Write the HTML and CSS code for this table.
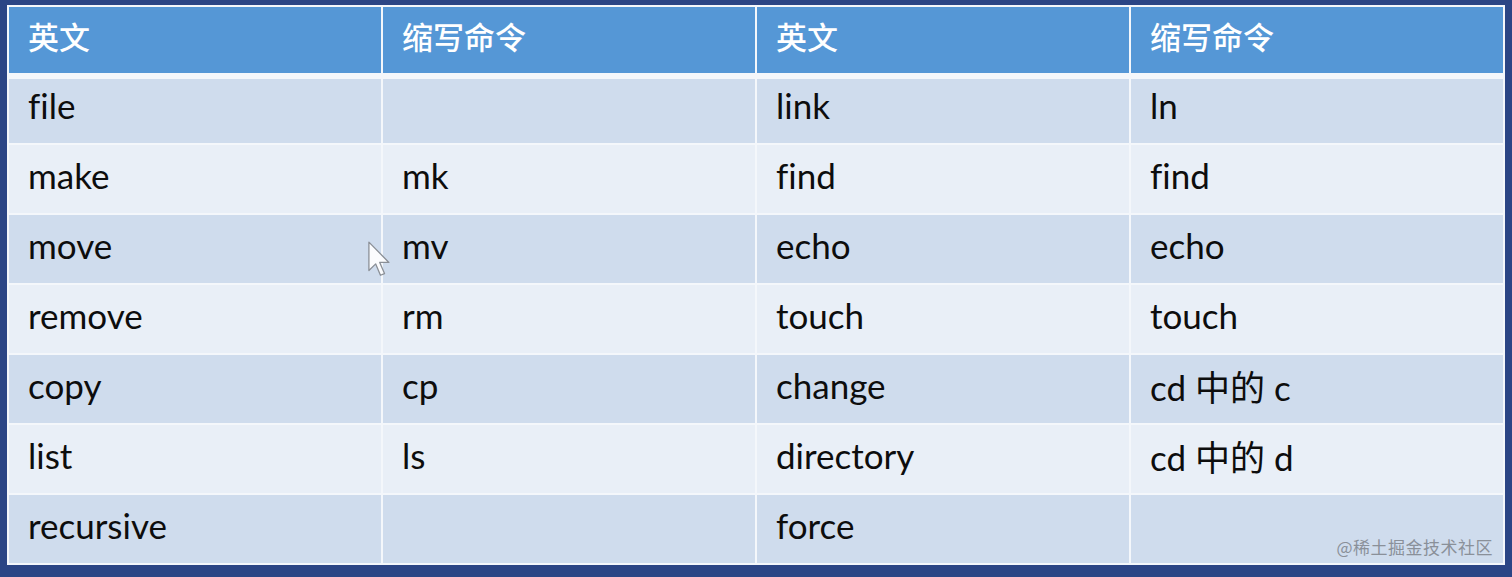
FILE: index.html
```html
<!DOCTYPE html>
<html lang="zh">
<head>
<meta charset="utf-8">
<title>命令缩写</title>
<link rel="stylesheet" href="styles.css">
</head>
<body>
<div class="frame">
  <div class="table">
    <div class="head">
      <div class="cell">英文</div>
      <div class="cell">缩写命令</div>
      <div class="cell">英文</div>
      <div class="cell">缩写命令</div>
    </div>
    <div class="rows">
      <div class="cell dark first">file</div>
      <div class="cell dark first"></div>
      <div class="cell dark first">link</div>
      <div class="cell dark first">ln</div>

      <div class="cell light">make</div>
      <div class="cell light">mk</div>
      <div class="cell light">find</div>
      <div class="cell light">find</div>

      <div class="cell dark">move</div>
      <div class="cell dark">mv</div>
      <div class="cell dark">echo</div>
      <div class="cell dark">echo</div>

      <div class="cell light">remove</div>
      <div class="cell light">rm</div>
      <div class="cell light">touch</div>
      <div class="cell light">touch</div>

      <div class="cell dark">copy</div>
      <div class="cell dark">cp</div>
      <div class="cell dark">change</div>
      <div class="cell dark">cd 中的 c</div>

      <div class="cell light">list</div>
      <div class="cell light">ls</div>
      <div class="cell light">directory</div>
      <div class="cell light">cd 中的 d</div>

      <div class="cell dark">recursive</div>
      <div class="cell dark"></div>
      <div class="cell dark">force</div>
      <div class="cell dark"></div>
    </div>
    <div class="watermark">@稀土掘金技术社区</div>
    <svg class="cursor" viewBox="0 0 12 20" width="22" height="37" aria-hidden="true">
      <path d="M0.5 0.5 L0.5 16 L4.2 12.4 L6.8 18.6 L9 17.7 L6.4 11.6 L11.4 11.6 Z" fill="#fbfcfe" stroke="#8a8f96" stroke-width="0.7" stroke-linejoin="round"/>
    </svg>
  </div>
</div>
</body>
</html>
```

FILE: styles.css
```css
html, body {
  margin: 0;
  padding: 0;
}

body {
  background: #2b4585;
  font-family: Lato, "Noto Sans CJK SC", sans-serif;
  height: 577px;
  overflow: hidden;
}

.frame {
  padding: 5px 0 0 7px;
}

.table {
  position: relative;
  width: 1498px;
  box-sizing: border-box;
  padding: 2px;
  background: #f4f7fb;
  display: flex;
  flex-direction: column;
}

.head {
  display: grid;
  grid-template-columns: repeat(4, 372px);
  column-gap: 2px;
  height: 66px;
}

.rows {
  display: grid;
  grid-template-columns: repeat(4, 372px);
  grid-template-rows: 64px repeat(6, 68px);
  gap: 2px;
  margin-top: 6px;
}

.cell {
  display: flex;
  align-items: center;
  padding: 0 0 8px 19px;
  box-sizing: border-box;
  font-size: 35px;
  color: #0d0d0d;
  white-space: nowrap;
  font-variant-ligatures: none;
}

.head .cell {
  background: #5597d6;
  color: #ffffff;
  font-family: "Noto Sans CJK SC", sans-serif;
  font-weight: 500;
  font-size: 31px;
  padding-bottom: 10px;
}

.dark {
  background: #cfdced;
}

.light {
  background: #e9eff7;
}

.first {
  padding-bottom: 12px;
}

.watermark {
  position: absolute;
  right: 12px;
  bottom: 6px;
  font-family: "Noto Sans CJK SC", sans-serif;
  font-size: 17px;
  color: #8a9099;
  letter-spacing: 0.5px;
}

.cursor {
  position: absolute;
  left: 361px;
  top: 236px;
}
```
